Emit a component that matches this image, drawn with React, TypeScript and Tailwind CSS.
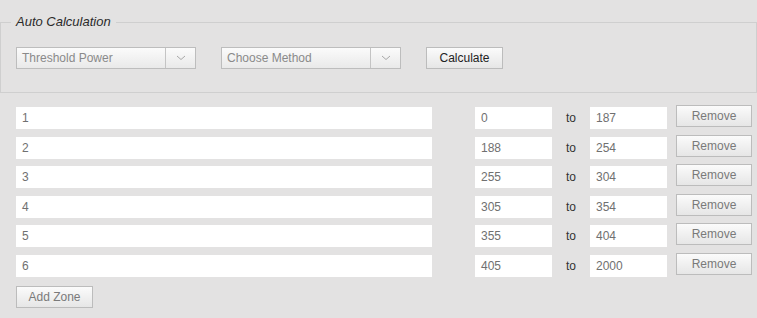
import React from 'react';

const ZONES = [
  { name: '1', min: '0', max: '187' },
  { name: '2', min: '188', max: '254' },
  { name: '3', min: '255', max: '304' },
  { name: '4', min: '305', max: '354' },
  { name: '5', min: '355', max: '404' },
  { name: '6', min: '405', max: '2000' },
];

const Chevron: React.FC = () => (
  <svg width="10" height="6" viewBox="0 0 10 6" className="block">
    <path d="M1 1 L5 4.5 L9 1" fill="none" stroke="#a8a8a8" strokeWidth="1" />
  </svg>
);

const Select: React.FC<{ label: string }> = ({ label }) => (
  <div className="flex h-[22px] w-[180px] border border-[#bdbdbd] bg-gradient-to-b from-[#fbfbfb] to-[#e9e9e9]">
    <div className="flex flex-1 items-center pl-[5px] text-[12px] text-[#8a8a8a]">{label}</div>
    <div className="flex w-[30px] items-center justify-center border-l border-[#c4c4c4]">
      <Chevron />
    </div>
  </div>
);

const Button: React.FC<{ label: string; dark?: boolean; className?: string }> = ({ label, dark, className }) => (
  <button
    className={`h-[22px] border border-[#bcbcbc] bg-gradient-to-b from-[#fbfbfb] to-[#e6e6e6] text-[12px] ${
      dark ? 'text-[#222]' : 'text-[#7a7a7a]'
    } ${className ?? ''}`}
  >
    {label}
  </button>
);

const Field: React.FC<{ value: string; className: string }> = ({ value, className }) => (
  <div className={`flex h-[22px] items-center bg-white pl-[6px] text-[12px] text-[#707070] ${className}`}>
    {value}
  </div>
);

export default function App() {
  return (
    <div
      className="h-[318px] w-[757px] overflow-hidden bg-[#e3e2e2] pt-[14px]"
      style={{ fontFamily: '"Liberation Sans", Arial, sans-serif' }}
    >
      {/* Auto calculation box */}
      <fieldset className="border border-[#cfcfcf] pt-[17px] pb-[23px]">
        <legend className="ml-[10px] px-[5px] text-[13px] leading-[16px] italic text-[#2a2a2a]">Auto Calculation</legend>
        <div className="flex items-center pl-[15px]">
          <Select label="Threshold Power" />
          <div className="ml-[25px]">
            <Select label="Choose Method" />
          </div>
          <Button label="Calculate" dark className="ml-[25px] w-[77px]" />
        </div>
      </fieldset>

      {/* Zones */}
      <div className="mt-[14px] flex flex-col gap-[7.6px] pl-[16px]">
        {ZONES.map((z) => (
          <div key={z.name} className="flex items-start">
            <Field value={z.name} className="w-[416px]" />
            <Field value={z.min} className="ml-[43px] w-[77px]" />
            <div className="flex h-[22px] w-[38px] items-center justify-center text-[12px] text-[#333]">to</div>
            <Field value={z.max} className="w-[77px]" />
            <Button label="Remove" className="-mt-[2px] ml-[9px] w-[76px]" />
          </div>
        ))}
        <div className="mt-[-0.6px]">
          <Button label="Add Zone" className="w-[77px]" />
        </div>
      </div>
    </div>
  );
}
